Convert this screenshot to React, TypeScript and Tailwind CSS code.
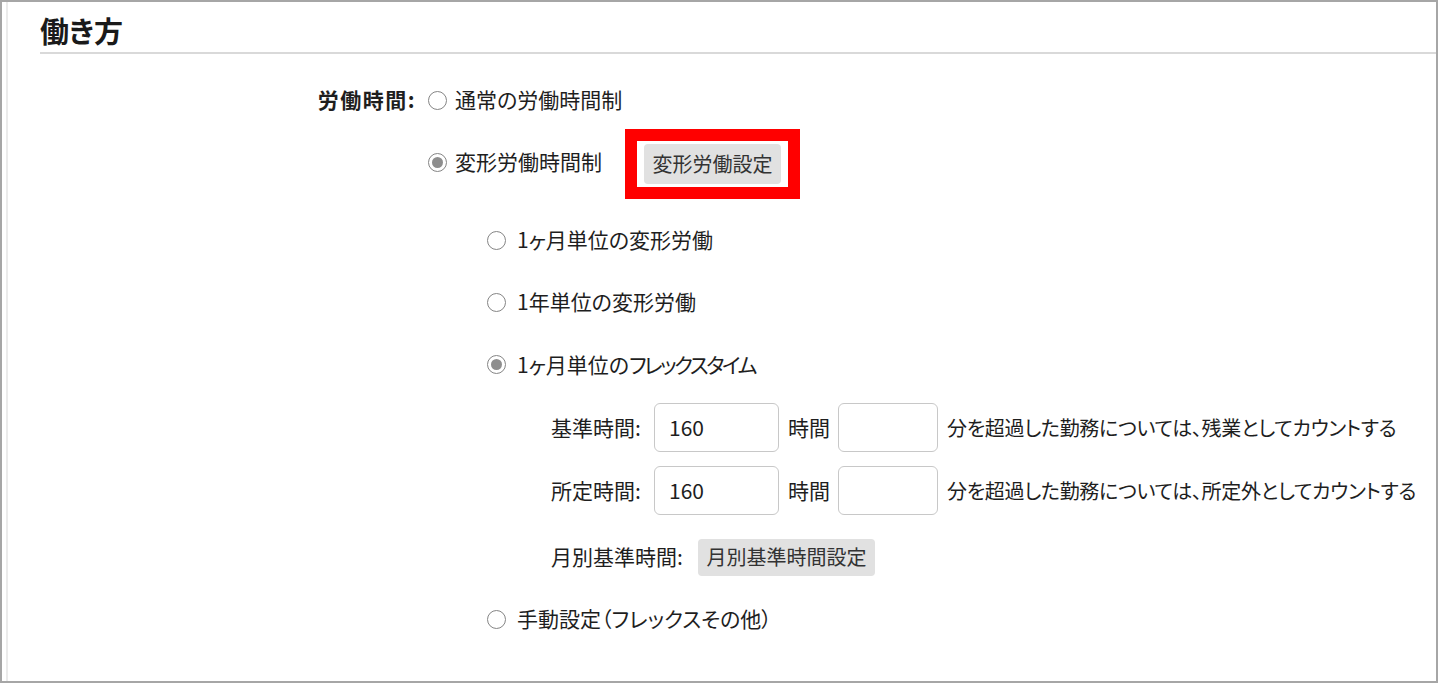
import React from 'react';

const font = "font-['Noto_Sans_CJK_JP','Noto_Sans_CJK_SC',sans-serif] [font-feature-settings:'palt']";

function Radio({ checked = false }: { checked?: boolean }) {
  return (
    <span className="flex w-[19px] h-[19px] shrink-0 items-center justify-center rounded-full border-[1.6px] border-[#858585] bg-white">
      {checked && <span className="block w-[11px] h-[11px] rounded-full bg-[#8e8e8e]" />}
    </span>
  );
}

function GreyButton({ children, className = '' }: { children: React.ReactNode; className?: string }) {
  return (
    <div className={`flex shrink-0 items-center justify-center rounded-[4px] bg-[#e1e1e1] text-[20px] text-[#333] ${className}`}>
      {children}
    </div>
  );
}

export default function App() {
  // サブ選択肢
  const subOptions = [
    { label: <>1ヶ月単位の変形労働</>, checked: false },
    { label: <>1年単位の変形労働</>, checked: false },
    { label: <>1ヶ月単位の<span className="tracking-[-2.5px]">フレックスタイム</span></>, checked: true },
  ];

  return (
    <div className={`w-[1438px] h-[683px] overflow-hidden bg-white border-2 border-[#a6a6a6] ${font} text-[#1e1e1e]`}>
      <div className="ml-[4px] h-full border-l-2 border-[#ebebeb]">
        {/* 見出し */}
        <div className="ml-[32px] pt-[6px] border-b-2 border-[#d9d9d9]">
          <h1 className="text-[29px] font-bold leading-[44px] text-[#1a1a1a]">働き方</h1>
        </div>

        {/* 労働時間 */}
        <div className="mt-[15px] flex h-[62px] items-center">
          <div className="w-[408px] text-right text-[21px] font-bold tracking-[1.5px]">労働時間:</div>
          <div className="ml-[12px] flex items-center gap-[8px] text-[21px]">
            <Radio />
            <span>通常の労働時間制</span>
          </div>
        </div>

        <div className="flex h-[62px] items-center pl-[420px] text-[21px]">
          <Radio checked />
          <span className="ml-[8px]">変形労働時間制</span>
          <div className="ml-[23px] shrink-0 border-[12px] border-[#ff0000] px-[7px] py-[3px] mt-[4px]">
            <GreyButton className="w-[137px] h-[40px]">変形労働設定</GreyButton>
          </div>
        </div>

        {/* 変形労働の種類 */}
        <div className="mt-[16px]">
          {subOptions.map((o, i) => (
            <div key={i} className={`flex items-center pl-[479px] text-[21px] ${i < 2 ? 'h-[62px]' : 'h-[63px]'}`}>
              <Radio checked={o.checked} />
              <span className="ml-[11px]">{o.label}</span>
            </div>
          ))}
        </div>

        {/* フレックス詳細 */}
        {[
          { label: '基準時間:', note: '分を超過した勤務については、残業としてカウントする' },
          { label: '所定時間:', note: '分を超過した勤務については、所定外としてカウントする' },
        ].map(r => (
          <div key={r.label} className="flex h-[63px] items-center pl-[543px] text-[21px]">
            <span className="w-[103px] shrink-0">{r.label}</span>
            <div className="flex w-[125px] h-[49px] shrink-0 items-center rounded-[6px] border-[1.5px] border-[#c8c8c8] pl-[14px]">160</div>
            <span className="ml-[9px] w-[50px] shrink-0">時間</span>
            <div className="w-[100px] h-[49px] shrink-0 rounded-[6px] border-[1.5px] border-[#c8c8c8]" />
            <span className="ml-[9px] whitespace-nowrap text-[20px] tracking-[-0.3px]">{r.note}</span>
          </div>
        ))}

        <div className="mt-[4px] flex h-[62px] items-center pl-[543px] text-[21px]">
          <span className="w-[147px] shrink-0">月別基準時間:</span>
          <GreyButton className="w-[177px] h-[37px]">月別基準時間設定</GreyButton>
        </div>

        <div className="flex h-[62px] items-center pl-[479px] text-[21px]">
          <Radio />
          <span className="ml-[11px]">手動設定（フレックスその他）</span>
        </div>
      </div>
    </div>
  );
}
